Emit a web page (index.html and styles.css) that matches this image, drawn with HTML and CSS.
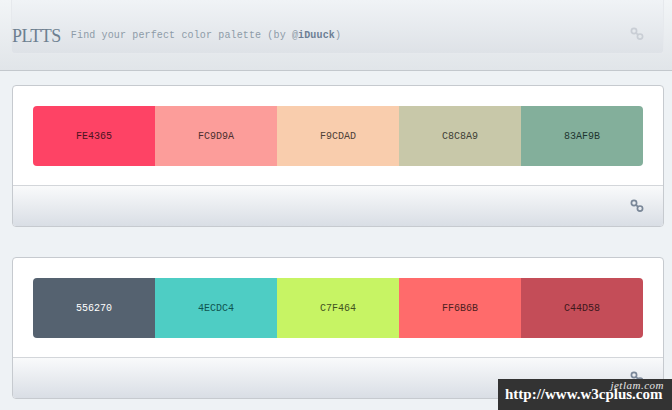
FILE: index.html
```html
<!DOCTYPE html>
<html lang="en">
<head>
    <meta charset="UTF-8">
    <meta name="viewport" content="width=device-width, initial-scale=1.0">
    <title>PLTTS</title>
    <link rel="stylesheet" href="styles.css">
</head>
<body>

    <svg class="icon-defs" width="0" height="0">
        <symbol id="chain" viewBox="0 0 14 14">
            <circle cx="4" cy="4" r="2.6"></circle>
            <circle cx="10" cy="9.6" r="2.6"></circle>
            <path d="M6 5.8 L8 7.8"></path>
        </symbol>
    </svg>

    <header class="site-header">
        <div class="header-inner">
            <h1 class="logo">PLTTS</h1>
            <p class="tagline">Find your perfect color palette (by @<b>iDuuck</b>)</p>
            <svg class="link-icon faded"><use href="#chain"></use></svg>
        </div>
    </header>

    <div class="palette-list">
        <section class="card">
            <div class="card-body">
                <div class="palette">
                    <div class="swatch c1">FE4365</div>
                    <div class="swatch c2">FC9D9A</div>
                    <div class="swatch c3">F9CDAD</div>
                    <div class="swatch c4">C8C8A9</div>
                    <div class="swatch c5">83AF9B</div>
                </div>
            </div>
            <div class="card-footer">
                <svg class="link-icon"><use href="#chain"></use></svg>
            </div>
        </section>

        <section class="card">
            <div class="card-body">
                <div class="palette">
                    <div class="swatch c6">556270</div>
                    <div class="swatch c7">4ECDC4</div>
                    <div class="swatch c8">C7F464</div>
                    <div class="swatch c9">FF6B6B</div>
                    <div class="swatch c10">C44D58</div>
                </div>
            </div>
            <div class="card-footer">
                <svg class="link-icon"><use href="#chain"></use></svg>
            </div>
        </section>
    </div>

    <!-- Watermark -->
    <div class="watermark">
        <span class="wm-credit">jetlam.com</span>
        <span class="wm-url">http://www.w3cplus.com</span>
    </div>

</body>
</html>
```

FILE: styles.css
```css
html, body {
    height: 410px;
    overflow: hidden;
}
body {
    margin: 0;
    position: relative;
    background-color: #eef2f5;
    font-family: "Liberation Mono", monospace;
    font-size: 10px;
}
.icon-defs {
    display: block;
    height: 0;
}

/* Header */
.site-header {
    height: 70px;
    padding-left: 11px;
    background: linear-gradient(#f2f5f7, #e1e5e9);
    border-bottom: 1px solid #c3c8cd;
}
.header-inner {
    width: 653px;
    height: 54px;
    box-sizing: border-box;
    display: flex;
    align-items: flex-end;
    padding: 0 19px 7px 0;
    background: linear-gradient(#f0f3f6, #dee2e7);
    border: 1px solid #e6e9ed;
    border-top: none;
    border-radius: 0 0 4px 4px;
}
.logo {
    margin: 0;
    font-family: "Liberation Serif", serif;
    font-weight: normal;
    font-size: 18px;
    line-height: 20px;
    letter-spacing: -0.5px;
    color: #6d7f90;
}
.tagline {
    margin: 0 0 3px 10px;
    line-height: 14px;
    letter-spacing: 0.14px;
    color: #8d9ba8;
}
.tagline b {
    color: #6c7e94;
}
.link-icon {
    display: block;
    width: 14px;
    height: 14px;
    fill: none;
    stroke: #7a8798;
    stroke-width: 1.7;
}
.link-icon.faded {
    margin: 0 0 5px auto;
    stroke: #c9ced5;
}

/* Palette cards */
.palette-list {
    display: flex;
    flex-direction: column;
    gap: 30px;
    padding: 14px 8px 0 12px;
}
.card {
    height: 142px;
    box-sizing: border-box;
    background-color: #fff;
    border: 1px solid #c6cacf;
    border-radius: 4px;
    overflow: hidden;
}
.card-body {
    height: 99px;
    box-sizing: border-box;
    padding: 20px 20px 0;
}
.palette {
    display: flex;
    height: 60px;
    border-radius: 4px;
    overflow: hidden;
}
.swatch {
    flex: 1;
    display: flex;
    align-items: center;
    justify-content: center;
    color: #333;
}
.c1 { background-color: #fe4365; color: #4a1421; }
.c2 { background-color: #fc9d9a; color: #4e2f2f; }
.c3 { background-color: #f9cdad; color: #4e4036; }
.c4 { background-color: #c8c8a9; color: #404036; }
.c5 { background-color: #83af9b; color: #1e3630; }
.c6 { background-color: #556270; color: #fff; }
.c7 { background-color: #4ecdc4; color: #0e5550; }
.c8 { background-color: #c7f464; color: #42521f; }
.c9 { background-color: #ff6b6b; color: #4e2020; }
.c10 { background-color: #c44d58; color: #40181c; }

.card-footer {
    height: 41px;
    box-sizing: border-box;
    display: flex;
    align-items: center;
    justify-content: flex-end;
    padding: 0 19px 1px 0;
    background: linear-gradient(#f9fafb, #d9dee5);
    border-top: 1px solid #d3d6da;
}

/* Watermark */
.watermark {
    position: absolute;
    right: 0;
    bottom: 0;
    width: 174px;
    height: 31px;
    background-color: #333;
    color: #fff;
}
.wm-url {
    position: absolute;
    left: 7px;
    top: 6px;
    font-family: "Liberation Serif", serif;
    font-weight: bold;
    font-size: 15px;
    line-height: 18px;
    white-space: nowrap;
}
.wm-credit {
    position: absolute;
    right: 8px;
    top: 0;
    font-family: "Liberation Serif", serif;
    font-style: italic;
    font-size: 11px;
    line-height: 12px;
    letter-spacing: 0.5px;
    color: #e6e6e6;
}
```
